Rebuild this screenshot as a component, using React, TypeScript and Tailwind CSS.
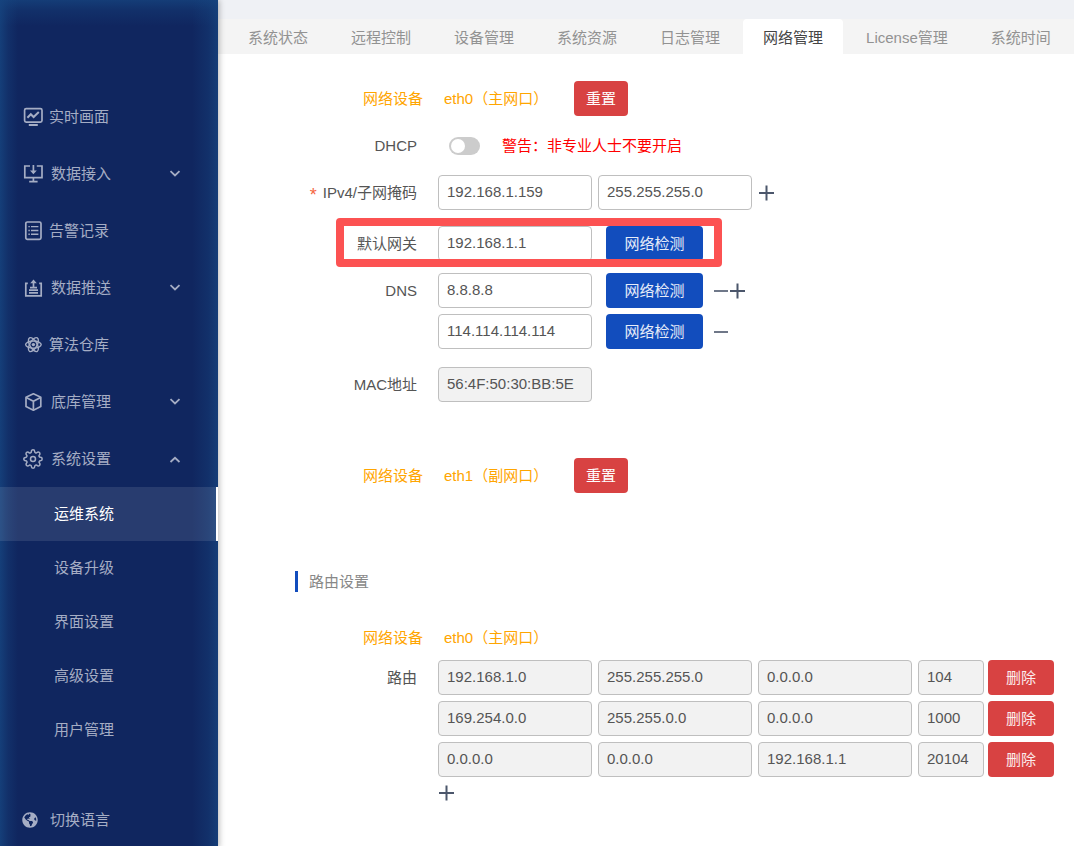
import React, { useState } from 'react';
import { FaGlobeAmericas } from 'react-icons/fa';
import { FiSettings } from 'react-icons/fi';

interface IconProps {
  children: React.ReactNode;
}

const MenuIcon: React.FC<IconProps> = ({ children }) => (
  <svg
    className="h-5 w-5 shrink-0"
    viewBox="0 0 20 20"
    fill="none"
    stroke="currentColor"
    strokeWidth="1.7"
    aria-hidden="true"
  >
    {children}
  </svg>
);

const MonitorIcon = () => (
  <MenuIcon>
    <rect x="1.6" y="1.6" width="17.4" height="13.6" rx="1.6" />
    <path d="M4.4 10.8l3.4-3.6 2.8 2.8L15.8 5" strokeWidth="2" />
    <path d="M5.8 18h9" strokeWidth="2" />
  </MenuIcon>
);

const DataInIcon = () => (
  <MenuIcon>
    <path d="M7 2H1.8v11.6h17.2V2H13.8" />
    <path d="M10.4 1v7.4M10.4 14v4M6.2 17.6h8.4" />
    <path d="M7 6.4h6.8l-3.4 3.8z" fill="currentColor" stroke="none" />
  </MenuIcon>
);

const ListIcon = () => (
  <MenuIcon>
    <rect x="2.8" y="1" width="15.2" height="17.4" rx="1.6" />
    <path d="M5.4 5.6h1.4M8 5.6h7.4M5.4 9.5h1.4M8 9.5h7.4M5.4 13.2h1.4M8 13.2h7.4" strokeWidth="1.4" />
  </MenuIcon>
);

const DataOutIcon = () => (
  <MenuIcon>
    <path d="M4.8 5.4H2.8v12.4h15.4V5.4h-2" />
    <path d="M10.5 3.6v5.2M7 9.6h7M6 12.2h9M6 14.8h9" />
    <path d="M7.2 5.2l3.3-3.8 3.3 3.8z" fill="currentColor" stroke="none" />
  </MenuIcon>
);

const AtomIcon = () => (
  <MenuIcon>
    <g strokeWidth="1.4">
      <ellipse cx="10.4" cy="9.6" rx="7.8" ry="3.6" />
      <ellipse cx="10.4" cy="9.6" rx="7.8" ry="3.6" transform="rotate(60 10.4 9.6)" />
      <ellipse cx="10.4" cy="9.6" rx="7.8" ry="3.6" transform="rotate(120 10.4 9.6)" />
    </g>
    <circle cx="10.4" cy="9.6" r="1.7" fill="currentColor" stroke="none" />
  </MenuIcon>
);

const BoxIcon = () => (
  <MenuIcon>
    <path d="M10.4 1.8l7.4 3.4v9.4l-7.4 3.6L3 14.6V5.2z" strokeLinejoin="round" />
    <path d="M3.2 5.4l7.2 3.8 7.2-3.8M10.4 9.2v8.6" />
  </MenuIcon>
);

const Chevron: React.FC<{ open?: boolean }> = ({ open }) => (
  <svg className="ml-auto h-3 w-3" viewBox="0 0 12 12" fill="none" stroke="currentColor" strokeWidth="1.8" aria-hidden="true">
    <path d={open ? 'M1.5 9L6 4.8 10.5 9' : 'M1.5 3.2L6 7.4l4.5-4.2'} />
  </svg>
);

const menuItems = [
  { label: '实时画面', icon: <MonitorIcon />, group: false },
  { label: '数据接入', icon: <DataInIcon />, group: true },
  { label: '告警记录', icon: <ListIcon />, group: false },
  { label: '数据推送', icon: <DataOutIcon />, group: true },
  { label: '算法仓库', icon: <AtomIcon />, group: false },
  { label: '底库管理', icon: <BoxIcon />, group: true },
  { label: '系统设置', icon: <FiSettings className="h-5 w-5 shrink-0" strokeWidth={1.8} />, group: true, open: true },
];

const subItems = ['运维系统', '设备升级', '界面设置', '高级设置', '用户管理'];

const tabs = ['系统状态', '远程控制', '设备管理', '系统资源', '日志管理', '网络管理', 'License管理', '系统时间'];

const routes = [
  ['192.168.1.0', '255.255.255.0', '0.0.0.0', '104'],
  ['169.254.0.0', '255.255.0.0', '0.0.0.0', '1000'],
  ['0.0.0.0', '0.0.0.0', '192.168.1.1', '20104'],
];

const Sidebar = () => {
  const [active, setActive] = useState('运维系统');

  return (
    <aside className="relative z-10 w-[218px] shrink-0 bg-[#10265f] bg-[linear-gradient(to_right,#164580cc,#16458055_8px,#16458000_18px,#16458000_calc(100%-26px),#16458055_calc(100%-10px),#164580bb),linear-gradient(to_bottom,#164580bb,#16458055_10px,#16458000_26px)] pt-[88px] text-[#a5adc4] shadow-[1px_0_6px_rgba(0,0,0,0.3)]">
      <nav>
        {menuItems.map((item) => (
          <a key={item.label} href="#" className="flex h-[57px] items-center pr-[37px] pl-[23px]">
            {item.icon}
            <span className={item.group ? 'ml-2' : 'ml-1.5'}>{item.label}</span>
            {item.group && <Chevron open={item.open} />}
          </a>
        ))}
        {/* Sous-menu de la section ouverte */}
        {subItems.map((label) => (
          <a
            key={label}
            href="#"
            onClick={() => setActive(label)}
            className={`flex h-[54px] items-center border-r-2 pl-[54px] ${
              active === label ? 'border-white bg-white/10 text-white' : 'border-transparent'
            }`}
          >
            {label}
          </a>
        ))}
      </nav>
      <button className="mt-[34px] flex h-[57px] w-full items-center gap-3 pl-[22px]">
        <FaGlobeAmericas className="h-4 w-4" />
        切换语言
      </button>
    </aside>
  );
};

interface FieldProps {
  value: string;
  label?: string;
  id?: string;
  disabled?: boolean;
  short?: boolean;
}

const Field: React.FC<FieldProps> = ({ value, label, id, disabled, short }) => (
  <input
    id={id}
    type="text"
    aria-label={label}
    defaultValue={value}
    disabled={disabled}
    className={`h-[35px] rounded border border-[#bfbfbf] px-2 pb-0.5 text-[#555] ${short ? 'w-[66px]' : 'w-[154px]'} ${
      disabled ? 'bg-[#f2f2f2]' : 'bg-white'
    }`}
  />
);

const PlusButton: React.FC<{ label: string }> = ({ label }) => (
  <button type="button" aria-label={label} className="text-[#4b566b]">
    <svg className="h-4 w-4" viewBox="0 0 16 16" stroke="currentColor" strokeWidth="2">
      <path d="M1 8h15M8.5 0.5v15" />
    </svg>
  </button>
);

const MinusButton: React.FC<{ label: string }> = ({ label }) => (
  <button type="button" aria-label={label} className="ml-2.5 text-[#4b566b]">
    <svg className="h-4 w-4" viewBox="0 0 16 16" stroke="currentColor" strokeWidth="1.6">
      <path d="M1 8h14" />
    </svg>
  </button>
);

const CheckButton = () => (
  <button type="button" className="ml-3.5 h-[35px] w-[97px] rounded bg-[#124dbd] text-white/90">
    网络检测
  </button>
);

interface RowProps {
  label?: string;
  htmlFor?: string;
  required?: boolean;
  className?: string;
  children: React.ReactNode;
}

const Row: React.FC<RowProps> = ({ label, htmlFor, required, className = '', children }) => (
  <div className={`relative flex items-center ${className}`}>
    <label htmlFor={htmlFor} className="mr-[21px] flex w-[199px] shrink-0 items-center justify-end gap-1.5">
      {required && <span className="pt-1 text-[18px] leading-5 text-[#f5663f]">*</span>}
      {label}
    </label>
    {children}
  </div>
);

const DeviceRow: React.FC<{ name: string; reset?: boolean; className?: string }> = ({ name, reset, className = '' }) => (
  <div className={`flex h-[35px] items-center text-[#ffa500] ${className}`}>
    <span className="mr-[21px] w-[205px] shrink-0 text-right">网络设备</span>
    <span className="w-[130px]">{name}</span>
    {reset && (
      <button type="button" className="h-[35px] w-[54px] rounded bg-[#d84242] text-white">
        重置
      </button>
    )}
  </div>
);

const App: React.FC = () => {
  const [activeTab, setActiveTab] = useState('网络管理');

  return (
    <div className="flex min-h-screen bg-white font-['Liberation_Sans','Noto_Sans_CJK_SC',sans-serif] text-[15px] leading-5 whitespace-nowrap text-[#555]">
      <Sidebar />

      <main className="min-w-0 flex-1">
        <div className="h-[19px] bg-[#eff1f5]" />
        <div className="flex h-[35px] gap-[3px] overflow-hidden bg-[#f4f4f4] pl-2.5">
          {tabs.map((tab) => (
            <button
              key={tab}
              onClick={() => setActiveTab(tab)}
              className={`shrink-0 rounded-t px-5 pt-0.5 ${
                activeTab === tab ? 'bg-white text-[#444]' : 'text-[#929292]'
              }`}
            >
              {tab}
            </button>
          ))}
        </div>

        <form className="pt-[27px]">
          <DeviceRow name="eth0（主网口）" reset />
          <Row label="DHCP" htmlFor="dhcp" className="h-[59px]">
            <input
              id="dhcp"
              type="checkbox"
              role="switch"
              className="ml-[11px] flex h-[18px] w-[31px] appearance-none items-center rounded-full bg-[#ccc] px-0.5 before:h-3.5 before:w-3.5 before:rounded-full before:bg-white checked:justify-end checked:bg-[#124dbd]"
            />
            <span className="ml-[22px] text-[#ff0000]">警告：非专业人士不要开启</span>
          </Row>
          <Row label="IPv4/子网掩码" htmlFor="ipv4" required>
            <div className="flex items-center gap-1.5">
              <Field id="ipv4" value="192.168.1.159" />
              <Field label="子网掩码" value="255.255.255.0" />
              <PlusButton label="添加地址" />
            </div>
          </Row>
          <Row label="默认网关" htmlFor="gateway" className="mt-4">
            <Field id="gateway" value="192.168.1.1" />
            <CheckButton />
            {/* Cadre rouge autour de la passerelle */}
            <div className="pointer-events-none absolute -top-2 left-[118px] h-[49px] w-[386px] rounded border-8 border-[#fc5252]" />
          </Row>
          <Row label="DNS" htmlFor="dns1" className="mt-3">
            <Field id="dns1" value="8.8.8.8" />
            <CheckButton />
            <MinusButton label="删除 DNS" />
            <PlusButton label="添加 DNS" />
          </Row>
          <Row className="mt-1.5">
            <Field label="DNS 2" value="114.114.114.114" />
            <CheckButton />
            <MinusButton label="删除 DNS 2" />
          </Row>
          <Row label="MAC地址" htmlFor="mac" className="mt-[18px]">
            <Field id="mac" value="56:4F:50:30:BB:5E" disabled />
          </Row>

          <DeviceRow name="eth1（副网口）" reset className="mt-14" />

          <h2 className="mt-[78px] ml-[77px] flex h-[21px] items-center border-l-3 border-[#124dbd] pl-[11px] text-[#888]">
            路由设置
          </h2>

          <DeviceRow name="eth0（主网口）" className="mt-7" />
          <div className="mt-[5px] flex flex-col gap-1.5">
            {routes.map((route, i) => (
              <Row key={i} label={i === 0 ? '路由' : ''} htmlFor={`route-${i}`}>
                <div className="mr-1 flex gap-1.5">
                  <Field id={`route-${i}`} value={route[0]} disabled />
                  <Field label="子网掩码" value={route[1]} disabled />
                  <Field label="网关" value={route[2]} disabled />
                  <Field label="优先级" value={route[3]} disabled short />
                </div>
                <button type="button" className="h-[35px] w-[66px] shrink-0 rounded bg-[#d84242] text-white/90">
                  删除
                </button>
              </Row>
            ))}
          </div>
          <Row className="mt-2">
            <PlusButton label="添加路由" />
          </Row>
        </form>
      </main>
    </div>
  );
};

export default App;
